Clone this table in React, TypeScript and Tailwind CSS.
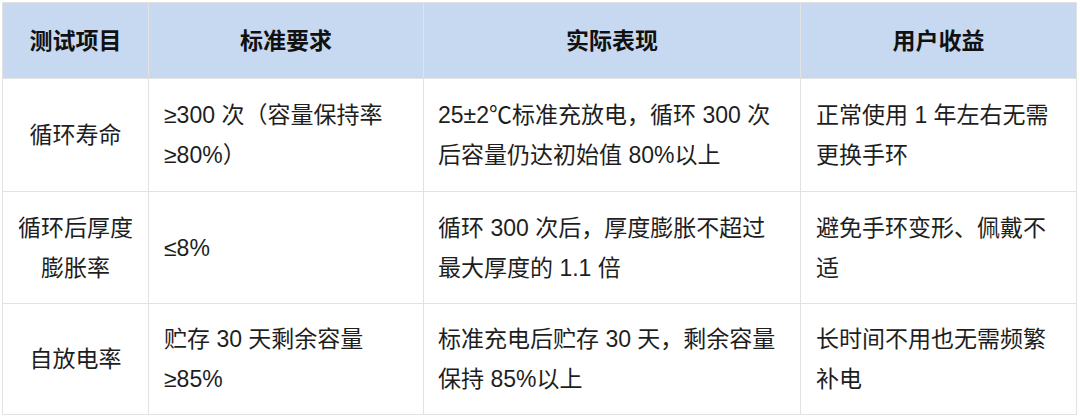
import React from "react";

const rows: { a: string[]; b: string[]; c: string[]; d: string[]; h: string }[] = [
  {
    a: ["循环寿命"],
    b: ["≥300 次（容量保持率", "≥80%）"],
    c: ["25±2℃标准充放电，循环 300 次", "后容量仍达初始值 80%以上"],
    d: ["正常使用 1 年左右无需", "更换手环"],
    h: "h-[113px]",
  },
  {
    a: ["循环后厚度", "膨胀率"],
    b: ["≤8%"],
    c: ["循环 300 次后，厚度膨胀不超过", "最大厚度的 1.1 倍"],
    d: ["避免手环变形、佩戴不", "适"],
    h: "h-[112px]",
  },
  {
    a: ["自放电率"],
    b: ["贮存 30 天剩余容量", "≥85%"],
    c: ["标准充电后贮存 30 天，剩余容量", "保持 85%以上"],
    d: ["长时间不用也无需频繁", "补电"],
    h: "h-[111px]",
  },
];

function Lines({ lines }: { lines: string[] }) {
  return (
    <>
      {lines.map((l, i) => (
        <div key={i} className="whitespace-nowrap">
          {l}
        </div>
      ))}
    </>
  );
}

export default function App() {
  return (
    <div
      className="w-[1080px] h-[420px] bg-white p-[2px] text-[#1e1e1e]"
      style={{ fontFamily: '"Liberation Sans", "Noto Sans CJK SC", sans-serif' }}
    >
      <table className="border-collapse table-fixed w-[1074px] text-[23px] leading-[40px]">
        <colgroup>
          <col className="w-[146px]" />
          <col className="w-[275px]" />
          <col className="w-[377px]" />
          <col className="w-[276px]" />
        </colgroup>
        <thead>
          <tr className="h-[76px] bg-[#c6d9f1]">
            {["测试项目", "标准要求", "实际表现", "用户收益"].map((t) => (
              <th
                key={t}
                className="border border-[#e2e2e2] font-bold text-center align-middle text-[#111111]"
              >
                {t}
              </th>
            ))}
          </tr>
        </thead>
        <tbody>
          {rows.map((r, i) => (
            <tr key={i} className={r.h}>
              <td className="border border-[#e2e2e2] text-center align-middle px-[8px]">
                <Lines lines={r.a} />
              </td>
              <td className="border border-[#e2e2e2] text-left align-middle px-[15px]">
                <Lines lines={r.b} />
              </td>
              <td className="border border-[#e2e2e2] text-left align-middle px-[14px]">
                <Lines lines={r.c} />
              </td>
              <td className="border border-[#e2e2e2] text-left align-middle px-[15px]">
                <Lines lines={r.d} />
              </td>
            </tr>
          ))}
        </tbody>
      </table>
    </div>
  );
}
